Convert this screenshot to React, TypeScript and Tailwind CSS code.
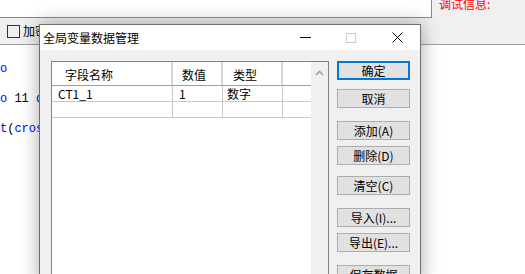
const cjk = "font-['Noto_Sans_CJK_SC','Noto_Sans',sans-serif]"

const buttons = [
  { label: "确定", mt: "mt-0", primary: true },
  { label: "取消", mt: "mt-[9px]" },
  { label: "添加(A)", mt: "mt-[13px]" },
  { label: "删除(D)", mt: "mt-[6px]" },
  { label: "清空(C)", mt: "mt-[11px]" },
  { label: "导入(I)...", mt: "mt-[13px]" },
  { label: "导出(E)...", mt: "mt-[6px]" },
  { label: "保存数据", mt: "mt-[13px]" },
]

function Background() {
  return (
    <div className="flex h-full flex-col bg-white">
      <div className="flex h-[18px]">
        <div className="w-[432px] border-r border-b border-[#8a8a8a] bg-white" />
        <div className="flex-1 overflow-hidden bg-[#f0f0f0] pl-[7px]">
          <div className={`-mt-[4px] text-[12px] leading-4 text-[#ff0000] ${cjk}`}>调试信息:</div>
        </div>
      </div>
      <div className="flex h-[27px] items-center border-b border-[#a0a0a0] bg-[#f0f0f0] pl-[7px]">
        <span className="h-[13px] w-[13px] border border-[#333]" />
        <span className={`ml-[3px] text-[12px] leading-4 ${cjk}`}>加密发送</span>
      </div>
      <div className="pt-[9px] font-['Liberation_Mono',monospace] text-[12px] leading-[30px] whitespace-pre text-[#0000ff]">
        <div>o</div>
        <div>
          o <span className="text-black">11</span> d
        </div>
        <div>
          t<span className="text-black">(</span>cros
        </div>
      </div>
    </div>
  )
}

function ListView() {
  return (
    <div className="flex h-[230px] w-[278px] border border-[#828282] bg-white text-[12px] leading-4">
      <div className="flex-1">
        <div className="flex h-[24px] items-center border-b border-[#a0a0a0]">
          <div className="h-full w-[121px] border-r-2 border-[#d6d6d6] pl-[13px] pt-[5px]">字段名称</div>
          <div className="h-full w-[50px] border-r-2 border-[#d6d6d6] pl-[9px] pt-[5px]">数值</div>
          <div className="h-full w-[60px] border-r-2 border-[#d6d6d6] pl-[10px] pt-[5px]">类型</div>
          <div className="h-full flex-1" />
        </div>
        <div className="flex h-[16px] border-b border-[#c8c8c8]">
          <div className="w-[121px] border-r border-[#c8c8c8] pl-[6px]">CT1_1</div>
          <div className="w-[50px] border-r border-[#c8c8c8] pl-[6px]">1</div>
          <div className="w-[60px] border-r border-[#c8c8c8] pl-[4px]">数字</div>
          <div className="w-[26px]" />
        </div>
        <div className="flex h-[16px] border-b border-[#c8c8c8]">
          <div className="w-[121px] border-r border-[#c8c8c8]" />
          <div className="w-[50px] border-r border-[#c8c8c8]" />
          <div className="w-[60px] border-r border-[#c8c8c8]" />
          <div className="w-[26px]" />
        </div>
      </div>
      <div className="flex w-[17px] justify-center bg-[#f0f0f0] pt-[8px]">
        <svg width="9" height="6" viewBox="0 0 9 6">
          <path d="M1 5 L4.5 1.5 L8 5" fill="none" stroke="#a3a3a3" strokeWidth="1.6" />
        </svg>
      </div>
    </div>
  )
}

function Dialog() {
  return (
    <div className={`absolute top-[24px] left-[39px] flex h-[260px] w-[382px] flex-col border border-[#6f6f6f] bg-[#f0f0f0] shadow-[0_0_18px_rgba(0,0,0,0.35)] ${cjk}`}>
      <div className="flex h-[25px] shrink-0 items-center bg-white">
        <span className="pl-[3px] text-[12px] leading-4 text-black">全局变量数据管理</span>
        <div className="ml-auto flex h-full">
          <div className="flex w-[46px] items-center justify-center">
            <div className="h-px w-[11px] bg-black" />
          </div>
          <div className="flex w-[46px] items-center justify-center">
            <div className="h-[10px] w-[10px] border border-[#cccccc]" />
          </div>
          <div className="flex w-[46px] items-center justify-center">
            <svg width="11" height="11" viewBox="0 0 11 11">
              <path d="M0.5 0.5 L10.5 10.5 M10.5 0.5 L0.5 10.5" stroke="#000" strokeWidth="1" />
            </svg>
          </div>
        </div>
      </div>
      <div className="flex gap-[8px] pt-[11px] pl-[11px]">
        <ListView />
        <div className="flex flex-col">
          {buttons.map((b) => (
            <button
              key={b.label}
              type="button"
              className={`${b.mt} flex h-[19px] w-[73px] items-center justify-center bg-[#e1e1e1] text-[12px] leading-4 text-black ${
                b.primary ? "border-2 border-[#0078d7]" : "border border-[#adadad]"
              }`}>
              {b.label}
            </button>
          ))}
        </div>
      </div>
    </div>
  )
}

export default function App() {
  return (
    <div className="relative h-[274px] w-[525px] overflow-hidden">
      <Background />
      <Dialog />
    </div>
  )
}
